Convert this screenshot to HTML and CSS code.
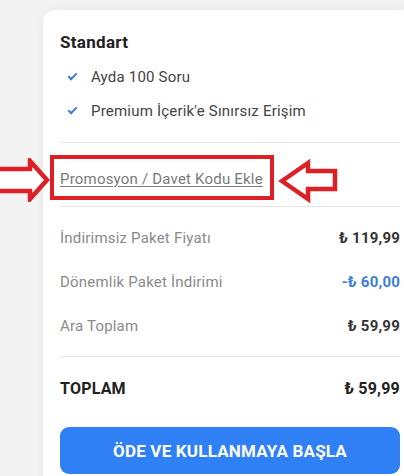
FILE: index.html
```html
<!DOCTYPE html>
<html lang="tr">
<head>
	<meta charset="UTF-8">
	<title>Ödeme Özeti</title>
	<link rel="stylesheet" href="styles.css">
</head>
<body>
<div class="card">
	<h2 class="plan">Standart</h2>
	<ul class="features">
		<li><span class="check"></span>Ayda 100 Soru</li>
		<li><span class="check"></span>Premium İçerik'e Sınırsız Erişim</li>
	</ul>

	<div class="promo">
		<div class="mark">
			<a href="#" class="promo-link">Promosyon / Davet Kodu Ekle</a>
		</div>
		<svg class="arrow arrow-left" width="50" height="44" viewBox="0 0 50 44">
			<polygon points="-6,11 30,11 30,3 47,22 30,41 30,33 -6,33" fill="#fff" stroke="#dd1f26" stroke-width="4.5" stroke-linejoin="miter"/>
		</svg>
		<svg class="arrow arrow-right" width="62" height="44" viewBox="0 0 62 44">
			<polygon points="4,22 30,4 30,12 57,12 57,30 30,30 30,40" fill="#fff" stroke="#dd1f26" stroke-width="4.5" stroke-linejoin="miter"/>
		</svg>
	</div>

	<div class="rows">
		<div class="row"><span class="label">İndirimsiz Paket Fiyatı</span><span class="value">₺ 119,99</span></div>
		<div class="row"><span class="label">Dönemlik Paket İndirimi</span><span class="value discount">-₺ 60,00</span></div>
		<div class="row"><span class="label">Ara Toplam</span><span class="value">₺ 59,99</span></div>
	</div>

	<div class="total">
		<span>TOPLAM</span><span>₺ 59,99</span>
	</div>

	<button class="pay">ÖDE VE KULLANMAYA BAŞLA</button>
</div>
</body>
</html>
```

FILE: styles.css
```css
* {
	margin: 0;
	padding: 0;
	box-sizing: border-box;
	list-style: none;
}
body {
	background: #f3f3f3;
	font-family: Roboto, "Noto Sans", sans-serif;
	overflow: hidden;
}
.card {
	margin: 10px 0 0 43px;
	width: 374px;
	height: 520px;
	background: #fff;
	border-radius: 12px;
	box-shadow: 0 0 12px rgba(0, 0, 0, 0.06);
	padding: 20px 17px 0 17px;
}
.plan {
	font-size: 17px;
	font-weight: 700;
	line-height: 24px;
	letter-spacing: 0.3px;
	color: #222;
}
.features {
	margin-top: 6px;
	padding-bottom: 14px;
	border-bottom: 1px solid #e6e6e6;
}
.features li {
	display: flex;
	align-items: center;
	height: 34px;
	padding-left: 8px;
	font-size: 15px;
	letter-spacing: 0.2px;
	color: #444;
}
.check {
	width: 9px;
	height: 5px;
	border-left: 2px solid #3a7bd5;
	border-bottom: 2px solid #3a7bd5;
	transform: rotate(-45deg);
	margin: -3px 14px 0 0;
}
.promo {
	position: relative;
	padding: 12px 0 6px;
	border-bottom: 1px solid #e6e6e6;
}
.mark {
	width: 224px;
	height: 45px;
	margin-left: -10px;
	border: 4px solid #dd1f26;
	display: flex;
	align-items: center;
	padding: 2px 0 0 6px;
}
.promo-link {
	font-size: 15px;
	letter-spacing: 0.2px;
	color: #7a7a7a;
	text-decoration: underline;
	text-underline-offset: 2px;
}
.arrow {
	position: absolute;
}
.arrow-left {
	left: -60px;
	top: 15px;
}
.arrow-right {
	left: 218px;
	top: 16px;
}
.rows {
	padding: 9px 0 8px;
	border-bottom: 1px solid #e6e6e6;
}
.row {
	display: flex;
	justify-content: space-between;
	align-items: center;
	height: 44px;
	font-size: 15px;
	letter-spacing: 0.2px;
}
.label {
	color: #8a8a8a;
}
.value {
	font-weight: 700;
	color: #333;
}
.value.discount {
	color: #3d7fd6;
}
.total {
	display: flex;
	justify-content: space-between;
	align-items: center;
	height: 44px;
	margin-top: 9px;
	font-size: 16px;
	font-weight: 700;
	letter-spacing: 0.2px;
	color: #222;
}
.pay {
	display: block;
	width: 100%;
	height: 47px;
	margin-top: 17px;
	border: 0;
	border-radius: 9px;
	background: #2f80f5;
	color: #fff;
	font-family: Roboto, "Noto Sans", sans-serif;
	font-size: 17px;
	font-weight: 700;
	letter-spacing: 0.2px;
}
```
